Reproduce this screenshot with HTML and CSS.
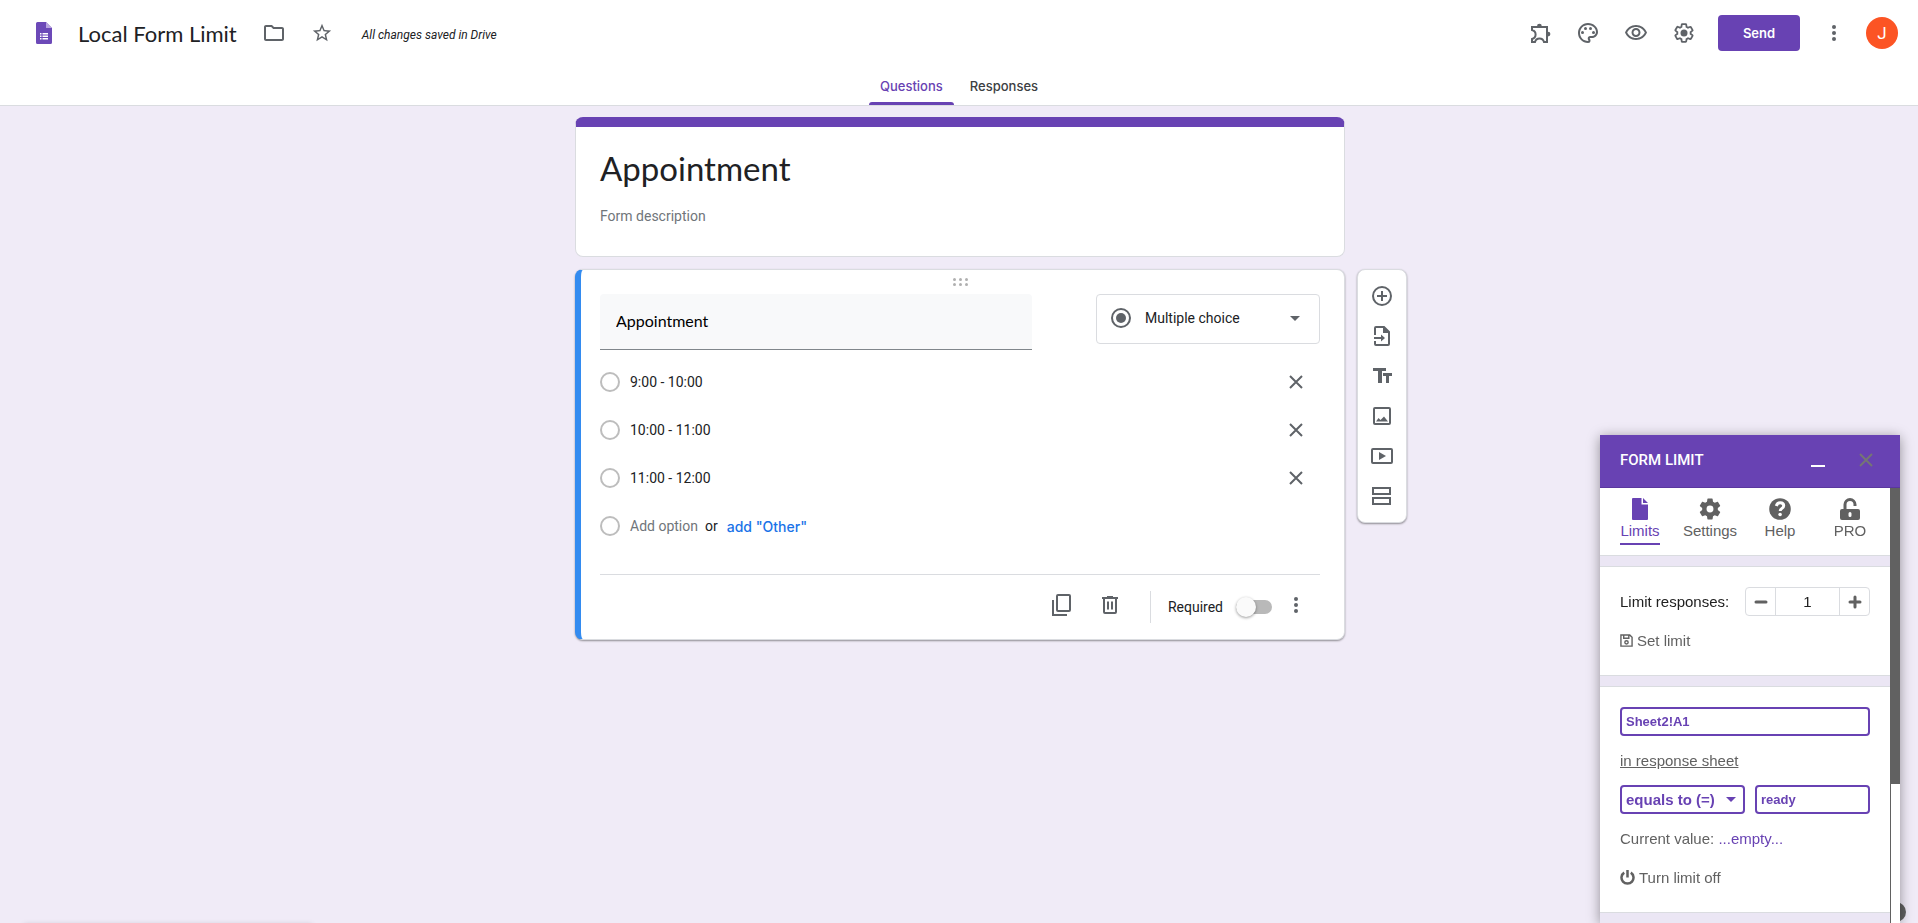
FILE: index.html
```html
<!DOCTYPE html>
<html lang="en">
  <head>
    <meta charset="UTF-8" />
    <meta name="viewport" content="width=device-width, initial-scale=1.0" />
    <title>Local Form Limit</title>
    <link rel="stylesheet" href="styles.css">
  </head>
  <body>
    <header class="header">
      <div class="topbar">
        <svg class="logo" viewBox="0 0 16 22">
          <path d="M1.5 0H10l6 6v14.5a1.5 1.5 0 0 1-1.5 1.5h-13A1.5 1.5 0 0 1 0 20.500v-19A1.500 1.500 0 0 1 1.500 0z" fill="#6c49b8" />
          <path d="M10 0l6 6h-6z" fill="#b9a6e0" />
          <path d="M4 11h1.500v1.500H4zm2.500 0H12v1.500H6.500zM4 13.500h1.500V15H4zm2.500 0H12V15H6.500zM4 16h1.500v1.500H4zm2.500 0H12v1.500H6.500z" fill="#fff" />
        </svg>
        <h1 class="doc-title">Local Form Limit</h1>
        <button class="icon-button" type="button" aria-label="Move to folder">
          <svg class="icon" viewBox="0 0 24 24"><path d="M9.170 6l2 2H20v10H4V6h5.170M10 4H4c-1.100 0-1.990.9-1.990 2L2 18c0 1.100.9 2 2 2h16c1.100 0 2-.9 2-2V8c0-1.100-.9-2-2-2h-8l-2-2z" /></svg>
        </button>
        <button class="icon-button" type="button" aria-label="Star">
          <svg class="icon icon-small" viewBox="0 0 24 24"><path d="M22 9.240l-7.190-.62L12 2 9.190 8.630 2 9.240l5.460 4.730L5.820 21 12 17.270 18.180 21l-1.630-7.030L22 9.240zM12 15.400l-3.760 2.270 1-4.280-3.320-2.880 4.380-.38L12 6.100l1.710 4.040 4.380.38-3.320 2.880 1 4.280L12 15.400z" /></svg>
        </button>
        <span class="save-status">All changes saved in Drive</span>

        <div class="actions">
          <button class="icon-button" type="button" aria-label="Add-ons">
            <svg class="icon" viewBox="0 0 24 24">
              <path class="line" d="M4 6h15v15h-3c-.6-2.300-2.200-3.600-4.500-3.600S7.600 18.700 7 21H4v-3c2.300-.6 3.600-2.200 3.600-4.500S6.300 9.600 4 9z" />
              <path d="M9 5.200a2.400 2.400 0 0 1 4.800 0zM20 10.700a2.400 2.400 0 0 1 0 4.800z" />
            </svg>
          </button>
          <button class="icon-button" type="button" aria-label="Customize theme">
            <svg class="icon" viewBox="0 0 24 24">
              <path d="M12 22C6.490 22 2 17.510 2 12S6.490 2 12 2s10 4.040 10 9c0 3.310-2.690 6-6 6h-1.770c-.28 0-.5.22-.5.5 0 .12.05.23.13.33.41.47.64 1.060.64 1.670A2.500 2.500 0 0 1 12 22zm0-18c-4.410 0-8 3.590-8 8s3.590 8 8 8c.28 0 .5-.22.5-.5a.54.54 0 0 0-.14-.35c-.41-.46-.63-1.050-.63-1.650a2.500 2.500 0 0 1 2.500-2.500H16c2.210 0 4-1.790 4-4 0-3.860-3.590-7-8-7z" />
              <circle cx="6.500" cy="11.500" r="1.500" /><circle cx="9.500" cy="7.500" r="1.500" />
              <circle cx="14.500" cy="7.500" r="1.500" /><circle cx="17.500" cy="11.500" r="1.500" />
            </svg>
          </button>
          <button class="icon-button" type="button" aria-label="Preview">
            <svg class="icon" viewBox="0 0 24 24"><path d="M12 6c3.790 0 7.170 2.130 8.820 5.500C19.170 14.870 15.790 17 12 17s-7.170-2.130-8.820-5.500C4.830 8.130 8.210 6 12 6m0-2C7 4 2.730 7.110 1 11.500 2.730 15.890 7 19 12 19s9.270-3.110 11-7.500C21.270 7.110 17 4 12 4zm0 5c1.380 0 2.500 1.120 2.500 2.500S13.380 14 12 14s-2.500-1.120-2.500-2.500S10.620 9 12 9m0-2c-2.480 0-4.500 2.020-4.500 4.500S9.520 16 12 16s4.500-2.020 4.500-4.500S14.480 7 12 7z" /></svg>
          </button>
          <button class="icon-button" type="button" aria-label="Settings">
            <svg class="icon" viewBox="0 0 24 24">
              <path class="line" transform="translate(1.300 1.300) scale(.89)" d="M19.430 12.980c.04-.32.07-.64.07-.98 0-.34-.03-.66-.07-.98l2.110-1.650c.19-.15.24-.42.12-.64l-2-3.460c-.09-.16-.26-.25-.44-.25l-2.660 1.030c-.52-.4-1.080-.73-1.690-.98l-.38-2.650C14.460 2.180 14.250 2 14 2h-4c-.25 0-.46.18-.49.42l-.38 2.650c-.61.25-1.170.59-1.690.98l-2.490-1c-.2-.05-.5 0-.61.22l-2 3.460c-.13.22-.07.49.12.64l2.110 1.650a7.900 7.900 0 0 0 0 1.960l-2.110 1.650c-.19.15-.24.42-.12.64l2 3.460c.09.16.26.25.44.25l2.660-1.030c.52.4 1.080.73 1.690.98l.38 2.650c.03.24.24.42.49.42h4c.25 0 .46-.18.49-.42l.38-2.650c.61-.25 1.170-.59 1.690-.98l2.490 1c.2.05.5 0 .61-.22l2-3.460c.12-.22.07-.49-.12-.64z" />
              <circle cx="12" cy="12" r="3.500" />
            </svg>
          </button>
          <button class="send" type="button">Send</button>
          <button class="icon-button" type="button" aria-label="More">
            <svg class="icon" viewBox="0 0 24 24"><circle cx="12" cy="6" r="2" /><circle cx="12" cy="12" r="2" /><circle cx="12" cy="18" r="2" /></svg>
          </button>
          <button class="avatar" type="button">J</button>
        </div>
      </div>
      <nav class="tabs">
        <a class="tab active" href="#questions">Questions</a>
        <a class="tab" href="#responses">Responses</a>
      </nav>
    </header>

    <main class="form" id="questions">
      <section class="card title-card">
        <h2 class="form-title">Appointment</h2>
        <p class="form-description">Form description</p>
      </section>

      <section class="card question-card">
        <svg class="drag" viewBox="0 0 15 8">
          <circle cx="1.500" cy="1.500" r="1.500" /><circle cx="7.500" cy="1.500" r="1.500" /><circle cx="13.500" cy="1.500" r="1.500" />
          <circle cx="1.500" cy="6.500" r="1.500" /><circle cx="7.500" cy="6.500" r="1.500" /><circle cx="13.500" cy="6.500" r="1.500" />
        </svg>
        <div class="question-row">
          <input class="question-input" type="text" aria-label="Question" value="Appointment" />
          <div class="type-picker">
            <svg class="icon" viewBox="0 0 24 24"><circle class="line" cx="12" cy="12" r="9" /><circle cx="12" cy="12" r="5" /></svg>
            <select class="type-select" aria-label="Question type">
              <option>Multiple choice</option>
              <option>Checkboxes</option>
              <option>Dropdown</option>
            </select>
            <span class="caret"></span>
          </div>
        </div>

        <ul class="options">
          <li class="option">
            <input class="radio" type="radio" name="slot" id="slot-1" />
            <label class="option-label" for="slot-1">9:00 - 10:00</label>
            <button class="remove" type="button" aria-label="Remove option"><svg class="cross" viewBox="0 0 14 14"><path d="M1 1l12 12M13 1L1 13" /></svg></button>
          </li>
          <li class="option">
            <input class="radio" type="radio" name="slot" id="slot-2" />
            <label class="option-label" for="slot-2">10:00 - 11:00</label>
            <button class="remove" type="button" aria-label="Remove option"><svg class="cross" viewBox="0 0 14 14"><path d="M1 1l12 12M13 1L1 13" /></svg></button>
          </li>
          <li class="option">
            <input class="radio" type="radio" name="slot" id="slot-3" />
            <label class="option-label" for="slot-3">11:00 - 12:00</label>
            <button class="remove" type="button" aria-label="Remove option"><svg class="cross" viewBox="0 0 14 14"><path d="M1 1l12 12M13 1L1 13" /></svg></button>
          </li>
          <li class="option">
            <input class="radio" type="radio" name="slot" id="slot-new" />
            <label class="add-option" for="slot-new">Add option</label>
            <span class="or">or</span>
            <button class="add-other" type="button">add "Other"</button>
          </li>
        </ul>

        <div class="question-footer">
          <button class="icon-button" type="button" aria-label="Duplicate">
            <svg class="icon" viewBox="0 0 24 24"><rect class="line" x="7" y="2" width="13" height="16" rx="1" /><path class="line" d="M3 7v15h14" /></svg>
          </button>
          <button class="icon-button" type="button" aria-label="Delete">
            <svg class="icon" viewBox="0 0 24 24"><path class="line" d="M4 5h16M6 5v14q0 1 1 1h10q1 0 1-1V5M10 8.500v8M14 8.500v8" /><path d="M9 3h6v2H9z" /></svg>
          </button>
          <span class="separator"></span>
          <label class="required" for="required">Required</label>
          <input class="toggle" type="checkbox" id="required" />
          <button class="icon-button" type="button" aria-label="More options">
            <svg class="icon" viewBox="0 0 24 24"><circle cx="12" cy="6" r="2" /><circle cx="12" cy="12" r="2" /><circle cx="12" cy="18" r="2" /></svg>
          </button>
        </div>

        <div class="toolbar">
          <button class="tool" type="button" aria-label="Add question">
            <svg class="icon" viewBox="0 0 24 24"><circle class="line" cx="12" cy="12" r="9" /><path class="line" d="M12 7v10M7 12h10" /></svg>
          </button>
          <button class="tool" type="button" aria-label="Import questions">
            <svg class="icon" viewBox="0 0 24 24"><path class="line" d="M5 11V4q0-1 1-1h8l5 5v12q0 1-1 1H6q-1 0-1-1v-3M4 14h8" /><path d="M13 2.500V9h6.500zM11 10.500l4 3.500-4 3.500z" /></svg>
          </button>
          <button class="tool" type="button" aria-label="Add title and description">
            <svg class="icon" viewBox="0 0 24 24"><path d="M3 4v3h5v12h4V7h4V4zM13 9v3h3v7h3v-7h3V9z" /></svg>
          </button>
          <button class="tool" type="button" aria-label="Add image">
            <svg class="icon" viewBox="0 0 24 24"><rect class="line" x="4" y="4" width="16" height="16" rx="1" /><path d="M6 17.500l2.500-3.500 2 2L14 12.500l4 5z" /></svg>
          </button>
          <button class="tool" type="button" aria-label="Add video">
            <svg class="icon" viewBox="0 0 24 24"><rect class="line" x="2" y="5" width="20" height="14" rx="1" /><path d="M9 8v8l7-4z" /></svg>
          </button>
          <button class="tool" type="button" aria-label="Add section">
            <svg class="icon" viewBox="0 0 24 24"><rect class="line" x="3" y="4" width="17" height="6" /><rect class="line" x="3" y="14" width="17" height="6" /></svg>
          </button>
        </div>
      </section>
    </main>

    <div class="toast"></div>
    <button class="help-button" type="button" aria-label="Help"></button>

    <aside class="widget">
      <div class="widget-header">
        <h2 class="widget-title">FORM LIMIT</h2>
        <button class="widget-button minimize" type="button" aria-label="Minimize"></button>
        <button class="widget-button" type="button" aria-label="Close"><svg class="cross cross-grey" viewBox="0 0 14 14"><path d="M1 1l12 12M13 1L1 13" /></svg></button>
      </div>
      <div class="widget-body">
        <div class="widget-content">
          <nav class="widget-nav">
            <a class="nav-item current" href="#limits">
              <svg class="nav-icon" viewBox="0 0 22 22"><path d="M4 0h8.500v6.500H19V21a1 1 0 0 1-1 1H4a1 1 0 0 1-1-1V1a1 1 0 0 1 1-1zM14 0l5 5h-5z" /></svg>
              <span class="nav-label">Limits</span>
            </a>
            <a class="nav-item" href="#settings">
              <svg class="nav-icon" viewBox="1.500 1.500 21 21"><path fill-rule="evenodd" d="M19.430 12.980c.04-.32.07-.64.07-.98 0-.34-.03-.66-.07-.98l2.110-1.650c.19-.15.24-.42.12-.64l-2-3.460c-.09-.16-.26-.25-.44-.25l-2.660 1.030c-.52-.4-1.080-.73-1.690-.98l-.38-2.650C14.460 2.180 14.250 2 14 2h-4c-.25 0-.46.18-.49.42l-.38 2.650c-.61.25-1.170.59-1.690.98l-2.490-1c-.2-.05-.5 0-.61.22l-2 3.460c-.13.22-.07.49.12.64l2.110 1.650a7.900 7.900 0 0 0 0 1.960l-2.110 1.650c-.19.15-.24.42-.12.64l2 3.460c.09.16.26.25.44.25l2.660-1.030c.52.4 1.080.73 1.690.98l.38 2.650c.03.24.24.42.49.42h4c.25 0 .46-.18.49-.42l.38-2.650c.61-.25 1.170-.59 1.690-.98l2.490 1c.2.05.5 0 .61-.22l2-3.460c.12-.22.07-.49-.12-.64zM12 8.700a3.300 3.300 0 1 0 0 6.600 3.300 3.300 0 0 0 0-6.600z" /></svg>
              <span class="nav-label">Settings</span>
            </a>
            <a class="nav-item" href="#help">
              <svg class="nav-icon" viewBox="0 0 22 22"><circle cx="11" cy="11" r="10.800" /><path class="knockout" d="M7.300 8c.6-2.200 2-3.200 3.900-3.200 2 0 3.500 1.200 3.500 3 0 2.700-3.500 2.500-3.500 5.200" /><circle class="dot" cx="11.100" cy="16.500" r="1.800" /></svg>
              <span class="nav-label">Help</span>
            </a>
            <a class="nav-item" href="#pro">
              <svg class="nav-icon" viewBox="0 0 22 22"><path fill-rule="evenodd" d="M3 11h16q2 0 2 2v7q0 2-2 2H3q-2 0-2-2v-7q0-2 2-2zm8 3q-1.500 0-1.500 1.500v2q0 1.500 1.500 1.500t1.500-1.500v-2q0-1.500-1.500-1.500z" /><path class="shackle" d="M6 11V6.500a5 5 0 0 1 10 0V8" /></svg>
              <span class="nav-label">PRO</span>
            </a>
          </nav>

          <section class="panel" id="limits">
            <div class="panel-row">
              <label class="dark" for="limit">Limit responses:</label>
              <div class="stepper">
                <button class="step" type="button" aria-label="Decrease"><svg class="sign" viewBox="0 0 14 14"><path d="M2 7h10" /></svg></button>
                <input class="step-value" type="text" id="limit" value="1" />
                <button class="step" type="button" aria-label="Increase"><svg class="sign" viewBox="0 0 14 14"><path d="M2 7h10M7 2v10" /></svg></button>
              </div>
            </div>
            <div class="panel-row">
              <button class="link-button" type="button">
                <svg class="small-icon" viewBox="0 0 14 14"><path class="thin" d="M1 1h9.500L13 3.500V13H1zM4 1v3.500h5.500V1" /><circle class="thin" cx="7" cy="9" r="1.800" /></svg>
                Set limit
              </button>
            </div>
          </section>

          <section class="panel">
            <div class="panel-row">
              <input class="field" type="text" aria-label="Cell" value="Sheet2!A1" />
            </div>
            <div class="panel-row"><a class="sheet-link" href="#sheet">in response sheet</a></div>
            <div class="panel-row">
              <div class="condition">
                <select class="condition-select" aria-label="Condition">
                  <option>equals to (=)</option>
                  <option>contains</option>
                </select>
                <span class="caret caret-purple"></span>
              </div>
              <input class="field" type="text" aria-label="Value" value="ready" />
            </div>
            <div class="panel-row">
              <p>Current value: <span class="purple">...empty...</span></p>
            </div>
            <div class="panel-row">
              <button class="link-button" type="button">
                <svg class="small-icon wide" viewBox="0 0 15 15"><path class="power" d="M4.200 2.600a6 6 0 1 0 6.600 0M7.500 0v7.500" /></svg>
                Turn limit off
              </button>
            </div>
          </section>
        </div>
        <div class="scrollbar"><div class="thumb"></div></div>
      </div>
    </aside>
  </body>
</html>
```
FILE: styles.css
```css
* {
  box-sizing: border-box;
  margin: 0;
  padding: 0;
}

body {
  background-color: #f0ebf7;
  color: #202124;
  font-family: Roboto, Arial, sans-serif;
  font-size: 14px;
  min-height: 100vh;
  overflow: hidden;
}

button,
input,
select {
  background: none;
  border: none;
  border-radius: 0;
  color: inherit;
  font: inherit;
}

button {
  cursor: pointer;
}

a {
  color: inherit;
  text-decoration: none;
}

svg {
  display: block;
}

.icon {
  width: 24px;
  height: 24px;
  fill: #5f6368;
}

.icon-small {
  width: 22px;
  height: 22px;
}

.line {
  fill: none;
  stroke: #5f6368;
  stroke-width: 2;
}

.icon-button {
  display: flex;
  align-items: center;
  justify-content: center;
  width: 48px;
  height: 48px;
}

/* Header */
.header {
  background-color: #fff;
  border-bottom: 1px solid #dadce0;
}

.topbar {
  display: flex;
  align-items: center;
  height: 66px;
  padding: 0 20px 0 36px;
}

.logo {
  width: 16px;
  height: 22px;
  margin-right: 26px;
}

.doc-title {
  margin-right: 13px;
  font-family: Lato, Roboto, sans-serif;
  font-size: 22px;
  font-weight: 400;
}

.save-status {
  margin-left: 16px;
  padding-top: 3px;
  font-size: 12px;
  font-style: italic;
}

.actions {
  display: flex;
  align-items: center;
  margin-left: auto;
}

.send {
  width: 82px;
  height: 36px;
  margin: 0 10px;
  border-radius: 4px;
  background-color: #6842b3;
  color: #fff;
  font-family: Inter, Roboto, sans-serif;
  font-size: 13px;
  font-weight: 600;
}

.avatar {
  width: 32px;
  height: 32px;
  margin-left: 8px;
  border-radius: 50%;
  background-color: #fc5424;
  color: #fff;
  font-size: 17px;
}

.tabs {
  display: flex;
  justify-content: center;
  gap: 5px;
}

.tab {
  height: 39px;
  padding: 0 11px;
  color: #3c4043;
  font-family: Inter, Roboto, sans-serif;
  font-size: 13px;
  font-weight: 500;
  line-height: 41px;
}

.tab.active {
  color: #6842b3;
}

.tab.active::after {
  content: "";
  display: block;
  height: 3px;
  margin: -5px -11px 0;
  border-radius: 3px 3px 0 0;
  background-color: #6842b3;
}

/* Form */
.form {
  display: flex;
  flex-direction: column;
  gap: 12px;
  max-width: 772px;
  margin: 11px auto 0;
  padding-left: 2px;
}

.card {
  position: relative;
  border: 1px solid #dadce0;
  border-radius: 8px;
  background-color: #fff;
}

.title-card {
  padding: 17px 24px 31px;
  border-top: 10px solid #6842b3;
}

.form-title {
  font-family: Lato, Roboto, sans-serif;
  font-size: 33px;
  font-weight: 400;
  line-height: 48px;
}

.form-description {
  margin-top: 15px;
  color: #70757a;
  line-height: 18px;
}

.question-card {
  padding: 8px 24px 0 19px;
  border-left: 6px solid #338bf0;
  box-shadow: 0 1px 2px rgba(0, 0, 0, 0.4);
}

.drag {
  width: 15px;
  height: 8px;
  margin: 0 auto 8px;
  fill: #b0b0b0;
}

.question-row {
  display: flex;
  align-items: flex-start;
  justify-content: space-between;
}

.question-input {
  width: 60%;
  height: 56px;
  padding: 0 16px 2px;
  border-bottom: 1px solid #80868b;
  border-radius: 4px 4px 0 0;
  background-color: #f8f9fa;
  color: #000;
  font-family: Lato, Roboto, sans-serif;
  font-size: 16px;
}

.type-picker {
  display: flex;
  align-items: center;
  gap: 12px;
  width: 224px;
  height: 50px;
  padding: 0 19px 2px 12px;
  border: 1px solid #dadce0;
  border-radius: 4px;
}

.type-select {
  flex: 1;
  appearance: none;
}

.caret {
  border: 5px solid transparent;
  border-top-color: #5f6368;
  border-bottom: none;
}

.options {
  padding-top: 8px;
  list-style: none;
}

.option {
  display: flex;
  align-items: center;
  height: 48px;
}

.radio {
  width: 20px;
  height: 20px;
  margin-right: 10px;
  appearance: none;
  border: 2px solid #bdbdbd;
  border-radius: 50%;
}

.option-label {
  flex: 1;
}

.remove {
  display: flex;
  align-items: center;
  justify-content: center;
  width: 48px;
  height: 48px;
}

.cross {
  width: 14px;
  height: 14px;
  stroke: #5f6368;
  stroke-width: 2;
}

.cross-grey {
  stroke: #757575;
}

.add-option {
  color: #70757a;
}

.or {
  margin: 0 9px 0 7px;
}

.add-other {
  color: #1a73e8;
  font-family: Inter, Roboto, sans-serif;
  font-weight: 500;
}

.question-footer {
  display: flex;
  align-items: center;
  justify-content: flex-end;
  height: 65px;
  margin-top: 24px;
  border-top: 1px solid #dadce0;
}

.question-footer .icon-button {
  align-self: flex-start;
  height: 60px;
}

.separator {
  width: 1px;
  height: 32px;
  margin: 0 17px 0 16px;
  background-color: #dadce0;
}

/* Switch, drawn on the checkbox itself */
.toggle {
  display: flex;
  align-items: center;
  width: 36px;
  height: 14px;
  margin-left: 13px;
  appearance: none;
  border-radius: 7px;
  background-color: #b9b9b9;
}

.toggle::before {
  content: "";
  width: 20px;
  height: 20px;
  border-radius: 50%;
  background-color: #fafafa;
  box-shadow: 0 1px 3px rgba(0, 0, 0, 0.4);
}

.toolbar {
  position: absolute;
  top: -1px;
  left: calc(100% + 13px);
  width: 50px;
  padding: 6px 5px;
  border: 1px solid #dadce0;
  border-radius: 8px;
  background-color: #fff;
  box-shadow: 0 1px 2px rgba(0, 0, 0, 0.4);
}

.tool {
  display: flex;
  align-items: center;
  justify-content: center;
  width: 38px;
  height: 40px;
}

/* Notification waiting below the window edge */
.toast {
  position: fixed;
  bottom: -50px;
  left: 24px;
  width: 288px;
  height: 48px;
  background-color: #323232;
  box-shadow: 0 0 6px rgba(0, 0, 0, 0.2);
}

.help-button {
  position: fixed;
  right: 12px;
  bottom: 1px;
  width: 20px;
  height: 20px;
  border-radius: 50%;
  background-color: #616161;
}

/* Add-on widget */
.widget {
  position: fixed;
  right: 18px;
  bottom: 0;
  width: 300px;
  background-color: #ebe6f4;
  box-shadow: 0 2px 12px rgba(0, 0, 0, 0.4);
  color: #616161;
  font-family: "Liberation Sans", Arial, sans-serif;
  font-size: 15px;
  line-height: 20px;
}

.widget-header {
  display: flex;
  align-items: center;
  height: 53px;
  padding: 0 10px 2px 20px;
  border-bottom: 1px solid #5a379e;
  background-color: #6842b3;
}

.widget-title {
  flex: 1;
  color: #fff;
  font-family: Roboto, sans-serif;
  font-size: 15px;
  font-weight: 500;
}

.widget-button {
  display: flex;
  align-items: center;
  justify-content: center;
  width: 48px;
  height: 48px;
}

.minimize::before {
  content: "";
  width: 14px;
  height: 2px;
  margin-top: 12px;
  background-color: #fff;
}

.widget-body {
  display: flex;
}

.widget-content {
  flex: 1;
  display: flex;
  flex-direction: column;
  gap: 10px;
  min-width: 0;
  padding-bottom: 10px;
}

.widget-nav {
  display: flex;
  height: 68px;
  padding: 10px 5px 0;
  border-bottom: 1px solid #dadce0;
  background-color: #fff;
}

.nav-item {
  flex: 1;
  display: flex;
  flex-direction: column;
  align-items: center;
}

.nav-icon {
  width: 22px;
  height: 22px;
  fill: #616161;
}

.nav-label {
  height: 25px;
  border-bottom: 2px solid transparent;
  line-height: 22px;
}

.current {
  color: #6842b3;
}

.current .nav-icon {
  fill: #6842b3;
}

.current .nav-label {
  border-color: #6842b3;
}

.knockout {
  fill: none;
  stroke: #fff;
  stroke-width: 3;
}

.dot {
  fill: #fff;
}

.shackle {
  fill: none;
  stroke: #616161;
  stroke-width: 3;
}

.panel {
  display: flex;
  flex-direction: column;
  gap: 10px;
  padding: 20px;
  border-top: 1px solid #dadce0;
  border-bottom: 1px solid #dadce0;
  background-color: #fff;
}

.panel-row {
  display: flex;
  align-items: center;
  justify-content: space-between;
  gap: 10px;
  height: 29px;
}

.dark {
  color: #212121;
}

.stepper {
  display: flex;
  width: 125px;
  height: 29px;
  border: 1px solid #dadce0;
  border-radius: 4px;
}

.step {
  display: flex;
  align-items: center;
  justify-content: center;
  width: 29px;
}

.sign {
  width: 14px;
  height: 14px;
  stroke: #616161;
  stroke-width: 3;
  stroke-linecap: round;
}

.step-value {
  flex: 1;
  min-width: 0;
  border-right: 1px solid #dadce0;
  border-left: 1px solid #dadce0;
  color: #212121;
  text-align: center;
}

.link-button {
  display: flex;
  align-items: center;
  gap: 4px;
}

.small-icon {
  width: 13px;
  height: 13px;
}

.small-icon.wide {
  width: 15px;
  height: 15px;
}

.thin,
.power {
  fill: none;
  stroke: #616161;
  stroke-width: 1.5;
}

.power {
  stroke-width: 2.5;
}

.field,
.condition {
  height: 29px;
  border: 2px solid #6842b3;
  border-radius: 4px;
  color: #6842b3;
  font-weight: 700;
}

.field {
  flex: 1;
  min-width: 0;
  padding: 0 4px;
  font-size: 13px;
}

.condition {
  display: flex;
  align-items: center;
  width: 125px;
  padding: 0 7px 0 4px;
}

.condition-select {
  flex: 1;
  min-width: 0;
  appearance: none;
}

.caret-purple {
  border-top-color: #6842b3;
}

.purple {
  color: #6842b3;
}

.sheet-link {
  text-decoration: underline;
}

.scrollbar {
  width: 10px;
  border-left: 1px solid #616161;
  background-color: #fff;
}

.thumb {
  height: 68%;
  background-color: #616161;
}
```
